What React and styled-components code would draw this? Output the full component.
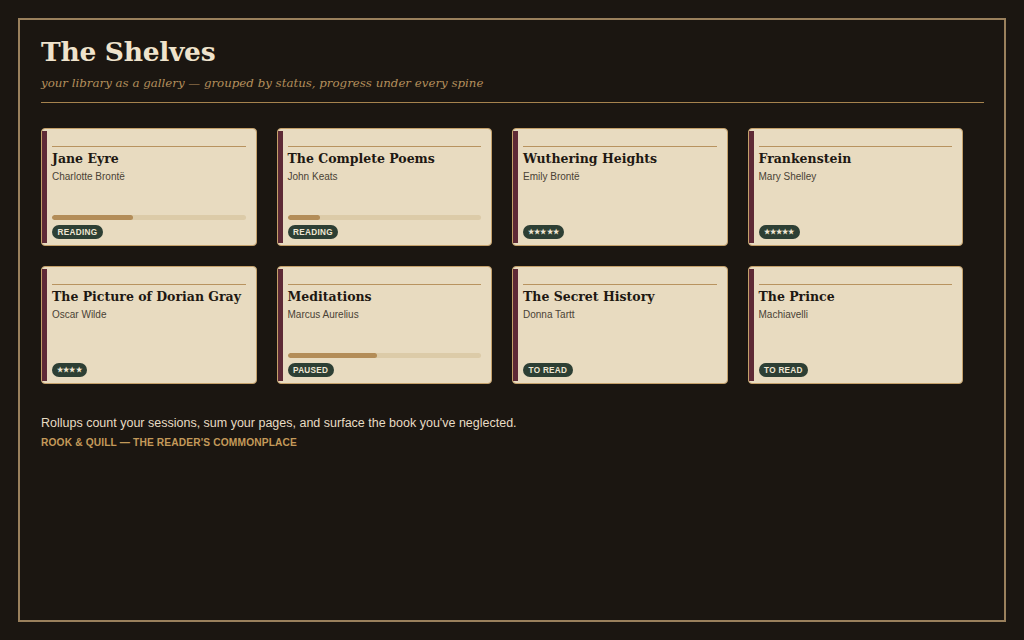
import React from "react";
import styled, { createGlobalStyle } from "styled-components";

const Global = createGlobalStyle`
  html, body { margin: 0; padding: 0; background: #1b1611; }
  body { font-family: "Liberation Sans", Arial, sans-serif; }
  * { box-sizing: border-box; }
`;

const Page = styled.div`
  padding: 18px;
  min-height: 100vh;
`;

const Frame = styled.main`
  border: 2px solid #9a805c;
  min-height: calc(100vh - 36px);
  padding: 14px 20px 20px 21px;
`;

const Header = styled.header`
  border-bottom: 1px solid #a6834e;
  padding-bottom: 10px;
`;

const Title = styled.h1`
  margin: 0;
  font-family: "DejaVu Serif", Georgia, serif;
  font-weight: 700;
  font-size: 26.5px;
  line-height: 36px;
  color: #efe3cc;
  letter-spacing: -0.3px;
`;

const Subtitle = styled.p`
  margin: 4px 0 0;
  font-family: "DejaVu Serif", Georgia, serif;
  font-style: italic;
  font-size: 11.8px;
  line-height: 18px;
  color: #b38f5c;
`;

const Grid = styled.section`
  margin-top: 25px;
  display: grid;
  grid-template-columns: repeat(4, 215.5px);
  gap: 20px;
`;

const Card = styled.article`
  position: relative;
  height: 118px;
  background: #e8dbc0;
  border: 1px solid #c4a06a;
  border-radius: 4px;
  padding: 17px 10px 6px 10px;
  display: flex;
  flex-direction: column;
  &::before {
    content: "";
    position: absolute;
    left: 0;
    top: 2px;
    bottom: 2px;
    width: 5px;
    background: #5e2a36;
  }
`;

const CardHead = styled.div`
  border-top: 1px solid #b8935f;
  padding-top: 3px;
`;

const BookTitle = styled.h2`
  margin: 0;
  font-family: "DejaVu Serif", Georgia, serif;
  font-weight: 700;
  font-size: 12.5px;
  line-height: 18px;
  color: #1e1812;
  white-space: nowrap;
`;

const Author = styled.div`
  margin-top: 3px;
  font-size: 10px;
  line-height: 12px;
  color: #4a4235;
`;

const Spacer = styled.div`
  flex: 1;
`;

const Track = styled.div`
  height: 5px;
  border-radius: 3px;
  background: #dccba8;
  margin-bottom: 5px;
  overflow: hidden;
`;

const Fill = styled.div`
  height: 100%;
  border-radius: 3px;
  background: #b38d58;
`;

const Badge = styled.span`
  align-self: flex-start;
  height: 14px;
  display: inline-flex;
  align-items: center;
  padding: 0 ${(p) => (p.$stars ? "5px" : "5.5px")};
  border-radius: 7px;
  background: #2d3f34;
  color: #efe6d3;
  font-size: ${(p) => (p.$stars ? "6.5px" : "8.2px")};
  font-weight: 700;
  letter-spacing: ${(p) => (p.$stars ? "0.2px" : "0.3px")};
  text-transform: uppercase;
`;

const Footer = styled.footer`
  margin-top: 31px;
`;

const Note = styled.p`
  margin: 0;
  font-size: 12.5px;
  line-height: 16px;
  color: #e8dcc4;
`;

const Colophon = styled.p`
  margin: 6px 0 0;
  font-size: 10.2px;
  line-height: 12px;
  font-weight: 700;
  color: #c49a5a;
  letter-spacing: 0.15px;
`;

const books = [
  { title: "Jane Eyre", author: "Charlotte Brontë", progress: 42, badge: "Reading" },
  { title: "The Complete Poems", author: "John Keats", progress: 17, badge: "Reading" },
  { title: "Wuthering Heights", author: "Emily Brontë", stars: 5 },
  { title: "Frankenstein", author: "Mary Shelley", stars: 5 },
  { title: "The Picture of Dorian Gray", author: "Oscar Wilde", stars: 4 },
  { title: "Meditations", author: "Marcus Aurelius", progress: 46, badge: "Paused" },
  { title: "The Secret History", author: "Donna Tartt", badge: "To read" },
  { title: "The Prince", author: "Machiavelli", badge: "To read" },
];

function BookCard({ book }) {
  return (
    <Card>
      <CardHead>
        <BookTitle>{book.title}</BookTitle>
        <Author>{book.author}</Author>
      </CardHead>
      <Spacer />
      {book.progress != null && (
        <Track>
          <Fill style={{ width: `${book.progress}%` }} />
        </Track>
      )}
      {book.stars ? (
        <Badge $stars>{"★".repeat(book.stars)}</Badge>
      ) : (
        <Badge>{book.badge}</Badge>
      )}
    </Card>
  );
}

export default function App() {
  return (
    <>
      <Global />
      <Page>
        <Frame>
          <Header>
            <Title>The Shelves</Title>
            <Subtitle>your library as a gallery — grouped by status, progress under every spine</Subtitle>
          </Header>
          <Grid>
            {books.map((b) => (
              <BookCard key={b.title} book={b} />
            ))}
          </Grid>
          <Footer>
            <Note>Rollups count your sessions, sum your pages, and surface the book you've neglected.</Note>
            <Colophon>ROOK &amp; QUILL — THE READER'S COMMONPLACE</Colophon>
          </Footer>
        </Frame>
      </Page>
    </>
  );
}
